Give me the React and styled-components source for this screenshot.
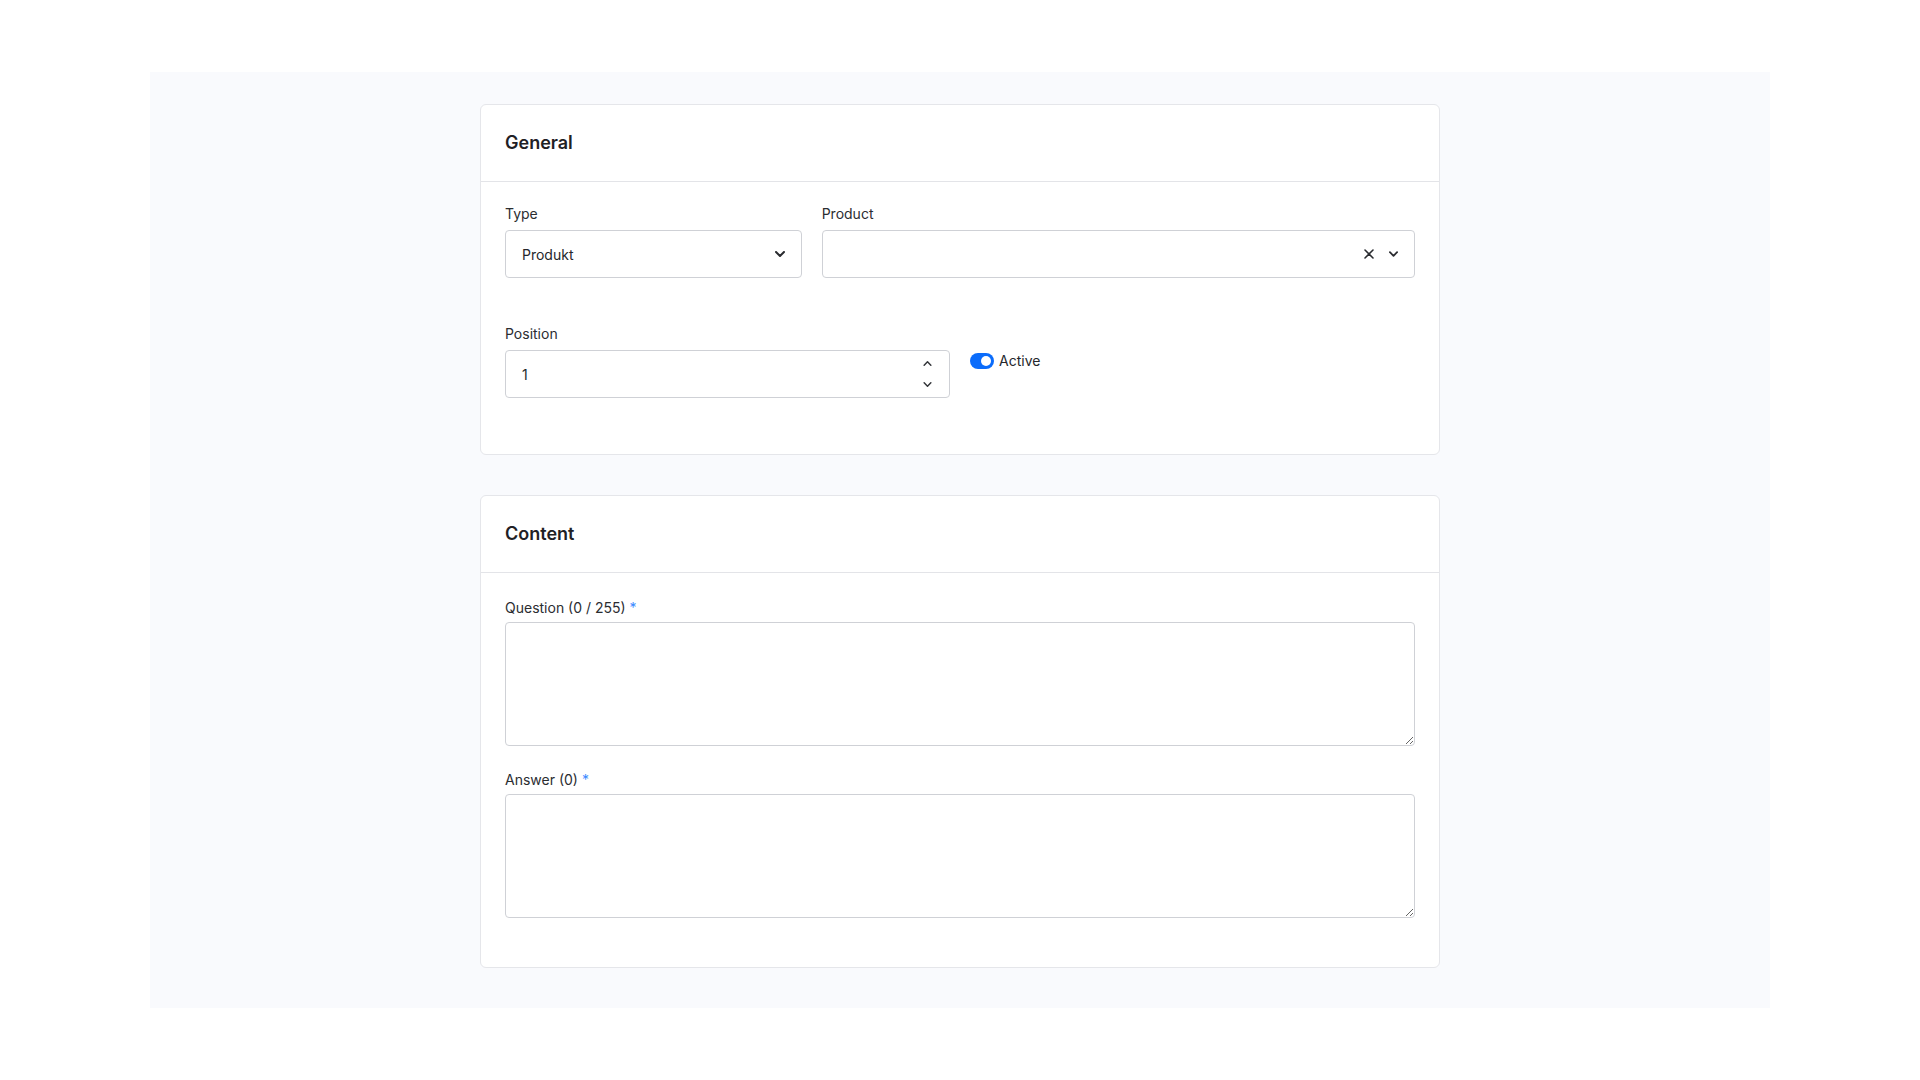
import React from 'react';
import styled, { createGlobalStyle } from 'styled-components';

const GlobalStyle = createGlobalStyle`
  * {
    box-sizing: border-box;
  }
  html,
  body {
    margin: 0;
    padding: 0;
    background: #ffffff;
  }
  body {
    font-family: Inter, 'Noto Sans', sans-serif;
    color: #212529;
    -webkit-font-smoothing: antialiased;
  }
`;

const Page = styled.div`
  padding-top: 72px;
`;

const Panel = styled.main`
  width: 1620px;
  margin: 0 auto;
  padding: 32px 0 40px;
  background: #f9fafd;
`;

const Card = styled.section`
  width: 960px;
  margin: 0 auto 40px;
  background: #ffffff;
  border: 1px solid #e5e6ea;
  border-radius: 6px;

  &:last-child {
    margin-bottom: 0;
  }
`;

const CardHeader = styled.header`
  padding: 24px;
  border-bottom: 1px solid #e3e4e8;
`;

const CardTitle = styled.h2`
  margin: 0;
  font-size: 18px;
  line-height: 28px;
  font-weight: 600;
  color: #1f2125;
`;

const CardBody = styled.div`
  padding: ${(p) => p.$top}px 24px ${(p) => p.$bottom}px;
`;

const Row = styled.div`
  display: grid;
  grid-template-columns: ${(p) => p.$cols};
  gap: 20px;
  margin-bottom: ${(p) => p.$mb || 0}px;
`;

const Field = styled.div`
  display: flex;
  flex-direction: column;
  margin-bottom: ${(p) => p.$mb || 0}px;
`;

const Label = styled.label`
  font-size: 14px;
  line-height: 20px;
  color: #2b2d31;
  margin-bottom: ${(p) => p.$gap}px;
`;

const Required = styled.span`
  color: #3b8bff;
`;

const Control = styled.div`
  display: flex;
  align-items: center;
  height: 48px;
  padding: 0 16px;
  border: 1px solid #cfd1d6;
  border-radius: 4px;
  background: #ffffff;
  font-size: 14px;
  color: #25272b;
`;

const Value = styled.span`
  flex: 1;
`;

const Icons = styled.span`
  display: flex;
  align-items: center;
  gap: 15px;
  color: #2a2c30;
`;

const Spinner = styled.span`
  display: flex;
  flex-direction: column;
  align-items: center;
  gap: 16px;
  margin-right: 1px;
  color: #34363a;
`;

const TextArea = styled.textarea`
  display: block;
  width: 100%;
  height: 124px;
  padding: 10px 16px;
  border: 1px solid #cfd1d6;
  border-radius: 4px;
  font-family: inherit;
  font-size: 14px;
  color: #25272b;
  resize: vertical;
  outline: none;
`;

const SwitchWrap = styled.div`
  display: flex;
  align-items: center;
  align-self: start;
  gap: 5px;
  margin-top: 27px;
  font-size: 14px;
  line-height: 20px;
  color: #25272b;
`;

const Track = styled.span`
  position: relative;
  width: 24px;
  height: 16px;
  border-radius: 8px;
  background: ${(p) => (p.$on ? '#0b6cfb' : '#cfd1d6')};

  &::after {
    content: '';
    position: absolute;
    top: 3px;
    ${(p) => (p.$on ? 'right: 3px;' : 'left: 3px;')}
    width: 10px;
    height: 10px;
    border-radius: 50%;
    background: #ffffff;
  }
`;

const ChevronDown = ({ w = 10, h = 6, sw = 2 }) => (
  <svg width={w} height={h} viewBox="0 0 10 6" fill="none">
    <path d="M1 1l4 4 4-4" stroke="currentColor" strokeWidth={sw} strokeLinecap="round" strokeLinejoin="round" />
  </svg>
);

const ChevronUp = ({ w = 10, h = 6, sw = 2 }) => (
  <svg width={w} height={h} viewBox="0 0 10 6" fill="none">
    <path d="M1 5l4-4 4 4" stroke="currentColor" strokeWidth={sw} strokeLinecap="round" strokeLinejoin="round" />
  </svg>
);

const CloseIcon = () => (
  <svg width="10" height="10" viewBox="0 0 10 10" fill="none">
    <path d="M1 1l8 8M9 1l-8 8" stroke="currentColor" strokeWidth="1.6" strokeLinecap="round" />
  </svg>
);

const App = () => (
  <Page>
    <GlobalStyle />
    <Panel>
      <Card>
        <CardHeader>
          <CardTitle>General</CardTitle>
        </CardHeader>
        <CardBody $top={22} $bottom={56}>
          <Row $cols="1fr 2fr" $mb={46}>
            <Field>
              <Label $gap={6}>Type</Label>
              <Control>
                <Value>Produkt</Value>
                <Icons>
                  <ChevronDown />
                </Icons>
              </Control>
            </Field>
            <Field>
              <Label $gap={6}>Product</Label>
              <Control>
                <Value />
                <Icons>
                  <CloseIcon />
                  <ChevronDown w={9} />
                </Icons>
              </Control>
            </Field>
          </Row>
          <Row $cols="1fr 1fr">
            <Field>
              <Label $gap={6}>Position</Label>
              <Control>
                <Value>1</Value>
                <Spinner>
                  <ChevronUp w={9} h={5} sw={1.8} />
                  <ChevronDown w={9} h={5} sw={1.8} />
                </Spinner>
              </Control>
            </Field>
            <SwitchWrap>
              <Track $on />
              Active
            </SwitchWrap>
          </Row>
        </CardBody>
      </Card>

      <Card>
        <CardHeader>
          <CardTitle>Content</CardTitle>
        </CardHeader>
        <CardBody $top={25} $bottom={49}>
          <Field $mb={24}>
            <Label $gap={4}>
              Question (0 / 255) <Required>*</Required>
            </Label>
            <TextArea />
          </Field>
          <Field>
            <Label $gap={4}>
              Answer (0) <Required>*</Required>
            </Label>
            <TextArea />
          </Field>
        </CardBody>
      </Card>
    </Panel>
  </Page>
);

export default App;
